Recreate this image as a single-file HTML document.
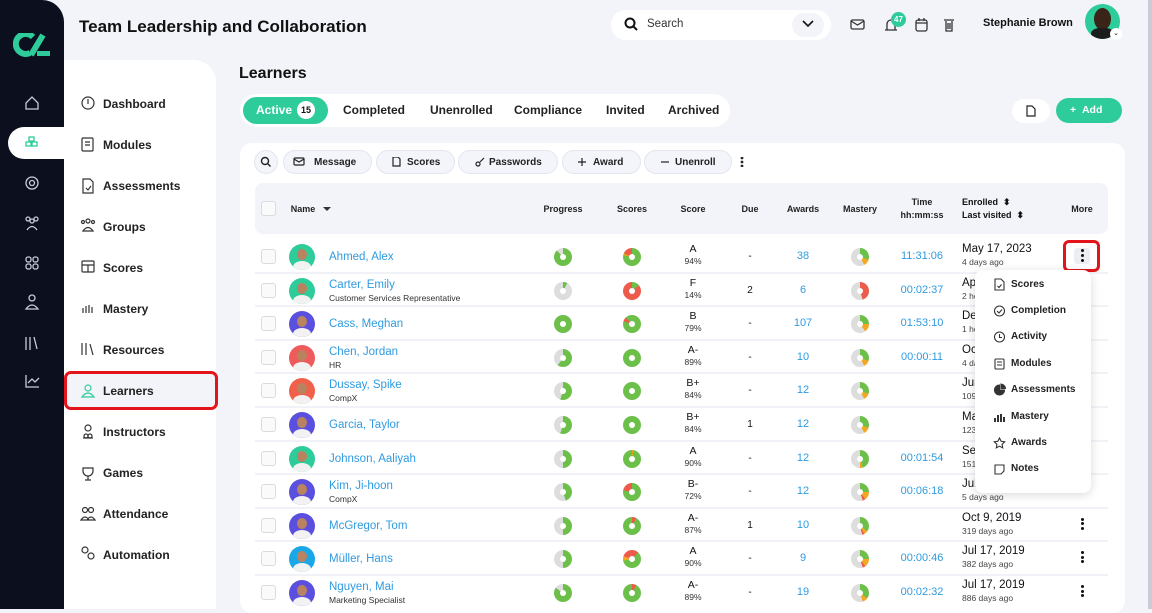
<!DOCTYPE html>
<html><head><meta charset="utf-8"><style>
*{box-sizing:border-box;margin:0;padding:0}
body{width:1152px;height:609px;overflow:hidden;background:#f2f4f9;font-family:"Liberation Sans",sans-serif;color:#111;position:relative}
.a{position:absolute}
.rail{left:0;top:0;width:64px;height:609px;background:#0b0f1e;border-top-right-radius:22px}
.nav{left:64px;top:60px;width:152px;height:549px;background:#fff;border-top-right-radius:22px}
.ni{position:absolute;left:103px;font-size:12px;font-weight:bold;color:#222}
.tabs{left:240px;top:94px;width:490px;height:33px;background:#fff;border-radius:17px}
.tab{position:absolute;top:103px;font-size:12px;font-weight:bold;color:#222}
.card{left:240px;top:143px;width:885px;height:470px;background:#fff;border-radius:12px}
.btn{position:absolute;top:150px;height:24px;border:1px solid #e3e6ef;background:#f4f5fa;border-radius:12px;font-size:10px;font-weight:bold;color:#222;line-height:24px;padding-left:30px}
.hd{left:255px;top:183px;width:853px;height:51px;background:#f2f4f9;border-radius:8px}
.th{position:absolute;font-size:9px;font-weight:bold;color:#222;text-align:center;transform:translateX(-50%);line-height:13px}
.row{position:absolute;left:255px;width:853px;height:33.6px;border-bottom:2px solid #f0f2f7}
.row>*{position:absolute}
.cb{left:6px;top:9px;width:15px;height:15px;border:1px solid #d8dbe2;border-radius:3px;background:#fafafa}
.av{left:34px;top:4px;width:26px;height:26px;border-radius:50%;overflow:hidden}
.av::after{content:"";position:absolute;left:8px;top:5px;width:10px;height:11px;border-radius:50%;background:#b9835f}
.av::before{content:"";position:absolute;left:4px;top:17px;width:18px;height:12px;border-radius:50%;background:#f2f2f2}
.nm{left:74px;font-size:11.5px;color:#2f9be0}
.sub{left:74px;font-size:8.5px;color:#333}
.d{width:18px;height:18px;border-radius:50%;top:8px;transform:translateX(-50%)}
.d::after{content:"";position:absolute;left:6px;top:6px;width:6px;height:6px;border-radius:50%;background:#fff}
.c{transform:translateX(-50%);text-align:center;font-size:10px}
.sc{top:3px;line-height:12px;font-size:10.5px}
.sc small{font-size:8.5px;color:#333}
.bl{color:#2f9be0;font-size:11px;top:10px}
.en{left:707px;font-size:11.5px;line-height:13px;top:3px}
.en small{font-size:8.5px;color:#444}
.mo{left:826px;top:9px;width:4px}
.mo i{display:block;width:3px;height:3px;background:#111;border-radius:50%;margin:0 0 1.5px}
.menu{left:975px;top:270px;width:116px;height:223px;background:#fff;border-radius:8px;box-shadow:0 2px 10px rgba(0,0,0,.15)}
.mi{position:absolute;left:1011px;font-size:10px;font-weight:bold;color:#222}
</style></head><body>
<div class="a rail"></div>
<svg class="a" style="left:13px;top:33px" width="40" height="26" viewBox="0 0 40 26"><path d="M20 4 A10 10 0 1 0 17 20" stroke="#2ecc9a" stroke-width="6" fill="none"/><path d="M30 2 L18 22" stroke="#2ecc9a" stroke-width="6"/><rect x="24" y="18" width="13" height="5" fill="#2ecc9a"/></svg>
<div class="a" style="left:8px;top:127px;width:60px;height:32px;background:#fff;border-radius:16px 0 0 16px"></div>
<svg class="a" style="left:24px;top:95px" width="16" height="300" viewBox="0 0 16 300" fill="none" stroke="#c9ccd8" stroke-width="1.3">
<path d="M2 8 L8 2 L14 8 V14 H2Z"/>
<g stroke="#2ecc9a"><rect x="5" y="42" width="5" height="4"/><rect x="2" y="47" width="5" height="4"/><rect x="8" y="47" width="5" height="4"/></g>
<circle cx="8" cy="88" r="6"/><circle cx="8" cy="88" r="2.5"/>
<circle cx="4" cy="124" r="2"/><circle cx="12" cy="124" r="2"/><circle cx="8" cy="126" r="2"/><path d="M3 135 q5-7 10 0"/>
<rect x="2" y="162" width="5" height="5" rx="2"/><rect x="9" y="162" width="5" height="5" rx="2"/><rect x="2" y="169" width="5" height="5" rx="2"/><rect x="9" y="169" width="5" height="5" rx="2"/>
<circle cx="8" cy="203" r="3"/><path d="M2 214 q6-8 12 0z"/>
<path d="M2 242v13M6 242v13M10 242l3 12"/>
<path d="M2 280v12h13M4 288l4-4 3 3 4-4"/>
</svg>
<div class="a" style="left:79px;top:17px;font-size:17px;font-weight:bold">Team Leadership and Collaboration</div>
<div class="a" style="left:611px;top:10px;width:220px;height:30px;background:#fff;border-radius:15px"></div>
<svg class="a" style="left:624px;top:17px" width="14" height="14" fill="none" stroke="#111" stroke-width="2"><circle cx="6" cy="6" r="4.5"/><path d="M9.5 9.5L13 13"/></svg>
<div class="a" style="left:647px;top:18px;font-size:11.5px;color:#333">Search</div>
<div class="a" style="left:792px;top:13px;width:32px;height:24px;background:#f2f4f9;border-radius:12px"></div>
<svg class="a" style="left:802px;top:20px" width="12" height="8" fill="none" stroke="#111" stroke-width="1.6"><path d="M1 1l5 5 5-5"/></svg>
<svg class="a" style="left:850px;top:17px" width="110" height="16" fill="none" stroke="#333" stroke-width="1.3"><rect x="1" y="3" width="13" height="9" rx="1.5"/><path d="M1 4l6.5 4 6.5-4"/><path d="M35 13h12M37 13v-6a4 4 0 0 1 8 0v6"/><rect x="66" y="3" width="11" height="11" rx="2"/><path d="M66 6h11M69 1v3M74 1v3"/><path d="M94 3h10M96 4v10h6V4M98 6v6M100 6v6"/></svg>
<div class="a" style="left:891px;top:12px;width:15px;height:15px;border-radius:50%;background:#2ecc9a;color:#fff;font-size:8px;font-weight:bold;text-align:center;line-height:15px">47</div>
<div class="a" style="left:983px;top:17px;font-size:11px;font-weight:bold">Stephanie Brown</div>
<div class="a" style="left:1085px;top:4px;width:35px;height:35px;border-radius:50%;background:#2ecc9a;overflow:hidden"><div class="a" style="left:9px;top:4px;width:17px;height:22px;border-radius:50%;background:#3a2418"></div><div class="a" style="left:6px;top:24px;width:23px;height:14px;border-radius:40%;background:#1c1c1c"></div></div>
<div class="a" style="left:1110px;top:28px;width:12px;height:12px;border-radius:50%;background:#fff;font-size:7px;text-align:center;line-height:12px">⌄</div>

<div class="a nav"></div>
<div class="a" style="left:64px;top:371px;width:154px;height:39px;background:#f2f4f9;border:3px solid #e4141b;border-radius:7px"></div>
<div class="ni" style="top:97px">Dashboard</div><div class="ni" style="top:138px">Modules</div><div class="ni" style="top:179px">Assessments</div><div class="ni" style="top:220px">Groups</div><div class="ni" style="top:261px">Scores</div><div class="ni" style="top:302px">Mastery</div><div class="ni" style="top:343px">Resources</div><div class="ni" style="top:384px">Learners</div><div class="ni" style="top:425px">Instructors</div><div class="ni" style="top:466px">Games</div><div class="ni" style="top:507px">Attendance</div><div class="ni" style="top:548px">Automation</div>
<svg class="a" style="left:80px;top:95px" width="16" height="470" fill="none" stroke="#333" stroke-width="1.2">
<circle cx="8" cy="8" r="6"/><path d="M8 4v5"/>
<rect x="2" y="43" width="11" height="13" rx="1"/><path d="M5 47h5M5 50h5"/>
<path d="M3 84h7l3 3v11H3z"/><path d="M6 93l2 2 3-4"/>
<circle cx="8" cy="126" r="2"/><circle cx="3" cy="127" r="1.5"/><circle cx="13" cy="127" r="1.5"/><path d="M3 136q5-7 10 0z"/>
<rect x="2" y="166" width="12" height="11" rx="1"/><path d="M2 170h12M8 170v7"/>
<path d="M3 218v-5M6 218v-7M9 218v-8M12 218v-6"/>
<path d="M2 248v12M6 248v12M10 249l3 11"/>
<circle cx="8" cy="293" r="3" stroke="#2ecc9a"/><path d="M2 302q6-8 12 0z" stroke="#2ecc9a"/>
<circle cx="8" cy="333" r="3"/><path d="M3 343h10"/><circle cx="6" cy="341" r="2"/><circle cx="10" cy="341" r="2"/>
<path d="M3 373h10v3a5 5 0 0 1-10 0z"/><path d="M8 381v4M5 385h6"/>
<circle cx="5" cy="415" r="2.5"/><circle cx="11" cy="415" r="2.5"/><path d="M1 425q4-6 8 0zM7 425q4-6 8 0z"/>
<circle cx="5" cy="455" r="3"/><circle cx="11" cy="461" r="3"/>
</svg>

<div class="a" style="left:239px;top:65px;font-size:16px;font-weight:bold">Learners</div>
<div class="a tabs"></div>
<div class="a" style="left:243px;top:97px;width:85px;height:27px;background:#2ecc9a;border-radius:14px"></div>
<div class="tab" style="left:256px;color:#fff">Active</div>
<div class="a" style="left:297px;top:101px;width:18px;height:18px;border-radius:50%;background:#fff;font-size:9px;font-weight:bold;text-align:center;line-height:18px">15</div>
<div class="tab" style="left:343px">Completed</div><div class="tab" style="left:430px">Unenrolled</div><div class="tab" style="left:514px">Compliance</div><div class="tab" style="left:606px">Invited</div><div class="tab" style="left:668px">Archived</div>
<div class="a" style="left:1012px;top:99px;width:38px;height:24px;background:#fff;border-radius:12px"></div>
<svg class="a" style="left:1026px;top:105px" width="10" height="12" fill="none" stroke="#222" stroke-width="1.2"><path d="M1 1h5l3 3v7H1z"/></svg>
<div class="a" style="left:1056px;top:98px;width:66px;height:25px;background:#2ecc9a;border-radius:13px;color:#fff;font-size:10.5px;font-weight:bold;line-height:25px;padding-left:14px">+ &nbsp;Add</div>

<div class="a card"></div>
<div class="a" style="left:254px;top:150px;width:24px;height:24px;border-radius:50%;border:1px solid #e3e6ef;background:#f4f5fa"></div>
<svg class="a" style="left:260px;top:156px" width="12" height="12" fill="none" stroke="#222" stroke-width="1.4"><circle cx="5" cy="5" r="3.5"/><path d="M7.5 7.5l3 3"/></svg>
<div class="btn" style="left:283px;width:89px">Message</div>
<div class="btn" style="left:376px;width:79px">Scores</div>
<div class="btn" style="left:458px;width:100px">Passwords</div>
<div class="btn" style="left:562px;width:79px">Award</div>
<div class="btn" style="left:644px;width:88px">Unenroll</div>
<svg class="a" style="left:293px;top:157px" width="460" height="10" fill="none" stroke="#222" stroke-width="1.2"><rect x="1" y="1" width="10" height="7" rx="1"/><path d="M1 2l5 3 5-3"/><path d="M100 0h5l2 2v7h-7z"/><circle cx="185" cy="7" r="2"/><path d="M187 5l4-4"/><path d="M285 5h8M289 1v8"/><path d="M368 5h8"/><circle cx="449" cy="1" r=".8"/><circle cx="449" cy="5" r=".8"/><circle cx="449" cy="9" r=".8"/></svg>

<div class="a hd"></div>
<div class="a" style="left:261px;top:201px;width:15px;height:15px;border:1px solid #d8dbe2;border-radius:3px;background:#fafafa"></div>
<div class="th" style="left:303px;top:203px">Name</div><div class="a" style="left:323px;top:207px;border:4px solid transparent;border-top:4px solid #333"></div>
<div class="th" style="left:563px;top:203px">Progress</div><div class="th" style="left:632px;top:203px">Scores</div><div class="th" style="left:693px;top:203px">Score</div><div class="th" style="left:750px;top:203px">Due</div><div class="th" style="left:803px;top:203px">Awards</div><div class="th" style="left:860px;top:203px">Mastery</div><div class="th" style="left:922px;top:196px">Time<br>hh:mm:ss</div>
<div class="a" style="left:962px;top:196px;font-size:9px;font-weight:bold;line-height:13px">Enrolled &nbsp;⬍<br>Last visited &nbsp;⬍</div>
<div class="th" style="left:1082px;top:203px">More</div>

<div class="row" style="top:240px"><div class="cb"></div><div class="av" style="background:#2ecc9a"></div><div class="nm" style="top:11px">Ahmed, Alex</div>
<div class="d" style="left:308px;background:conic-gradient(#6cc04a 0 88%,#ddd 0)"></div><div class="d" style="left:377px;background:conic-gradient(#6cc04a 0 78%,#e8a020 0 82%,#ec5b4b 0)"></div>
<div class="c sc" style="left:438px">A<br><small>94%</small></div><div class="c" style="left:495px;top:11px">-</div><div class="c bl" style="left:548px">38</div>
<div class="d" style="left:605px;background:conic-gradient(#6cc04a 0 30%,#f5a623 0 42%,#ddd 0)"></div><div class="c bl" style="left:667px">11:31:06</div>
<div class="en">May 17, 2023<br><small>4 days ago</small></div></div>
<div class="a" style="left:1063px;top:240px;width:37px;height:32px;border:3px solid #e4141b;border-radius:6px;background:#fff"><div style="position:absolute;left:8px;top:5px;width:16px;height:16px;background:#eceef3;border-radius:3px"></div><div style="position:absolute;left:14.5px;top:6px;width:3px;line-height:0"><i style="display:block;width:3px;height:3px;background:#111;border-radius:50%;margin-bottom:2px"></i><i style="display:block;width:3px;height:3px;background:#111;border-radius:50%;margin-bottom:2px"></i><i style="display:block;width:3px;height:3px;background:#111;border-radius:50%"></i></div></div>

<div class="row" style="top:273.6px"><div class="cb"></div><div class="av" style="background:#2ecc9a"></div><div class="nm" style="top:5px">Carter, Emily</div><div class="sub" style="top:19px">Customer Services Representative</div>
<div class="d" style="left:308px;background:conic-gradient(#6cc04a 0 8%,#ddd 0)"></div><div class="d" style="left:377px;background:conic-gradient(#6cc04a 0 14%,#ec5b4b 0)"></div>
<div class="c sc" style="left:438px">F<br><small>14%</small></div><div class="c" style="left:495px;top:11px">2</div><div class="c bl" style="left:548px">6</div>
<div class="d" style="left:605px;background:conic-gradient(#ec5b4b 0 45%,#ddd 0)"></div><div class="c bl" style="left:667px">00:02:37</div>
<div class="en">Apr 12, 2023<br><small>2 hours ago</small></div></div>

<div class="row" style="top:307.2px"><div class="cb"></div><div class="av" style="background:#5b4fe0"></div><div class="nm" style="top:11px">Cass, Meghan</div>
<div class="d" style="left:308px;background:conic-gradient(#6cc04a 0 100%)"></div><div class="d" style="left:377px;background:conic-gradient(#6cc04a 0 80%,#ec5b4b 0 88%,#6cc04a 0)"></div>
<div class="c sc" style="left:438px">B<br><small>79%</small></div><div class="c" style="left:495px;top:11px">-</div><div class="c bl" style="left:548px">107</div>
<div class="d" style="left:605px;background:conic-gradient(#6cc04a 0 25%,#f5a623 0 40%,#ddd 0)"></div><div class="c bl" style="left:667px">01:53:10</div>
<div class="en">Dec 1, 2022<br><small>1 hour ago</small></div></div>

<div class="row" style="top:340.8px"><div class="cb"></div><div class="av" style="background:#ef5a5a"></div><div class="nm" style="top:5px">Chen, Jordan</div><div class="sub" style="top:19px">HR</div>
<div class="d" style="left:308px;background:conic-gradient(#6cc04a 0 60%,#ddd 0)"></div><div class="d" style="left:377px;background:conic-gradient(#6cc04a 0 100%)"></div>
<div class="c sc" style="left:438px">A-<br><small>89%</small></div><div class="c" style="left:495px;top:11px">-</div><div class="c bl" style="left:548px">10</div>
<div class="d" style="left:605px;background:conic-gradient(#6cc04a 0 30%,#f5a623 0 42%,#ddd 0)"></div><div class="c bl" style="left:667px">00:00:11</div>
<div class="en">Oct 4, 2022<br><small>4 days ago</small></div></div>

<div class="row" style="top:374.4px"><div class="cb"></div><div class="av" style="background:#f0604a"></div><div class="nm" style="top:5px">Dussay, Spike</div><div class="sub" style="top:19px">CompX</div>
<div class="d" style="left:308px;background:conic-gradient(#6cc04a 0 55%,#ddd 0)"></div><div class="d" style="left:377px;background:conic-gradient(#6cc04a 0 100%)"></div>
<div class="c sc" style="left:438px">B+<br><small>84%</small></div><div class="c" style="left:495px;top:11px">-</div><div class="c bl" style="left:548px">12</div>
<div class="d" style="left:605px;background:conic-gradient(#6cc04a 0 30%,#f5a623 0 42%,#ddd 0)"></div>
<div class="en">Jun 5, 2022<br><small>109 days ago</small></div></div>

<div class="row" style="top:408px"><div class="cb"></div><div class="av" style="background:#5b4fe0"></div><div class="nm" style="top:11px">Garcia, Taylor</div>
<div class="d" style="left:308px;background:conic-gradient(#6cc04a 0 55%,#ddd 0)"></div><div class="d" style="left:377px;background:conic-gradient(#6cc04a 0 100%)"></div>
<div class="c sc" style="left:438px">B+<br><small>84%</small></div><div class="c" style="left:495px;top:11px">1</div><div class="c bl" style="left:548px">12</div>
<div class="d" style="left:605px;background:conic-gradient(#6cc04a 0 30%,#f5a623 0 42%,#ddd 0)"></div>
<div class="en">Mar 8, 2022<br><small>123 days ago</small></div></div>

<div class="row" style="top:441.6px"><div class="cb"></div><div class="av" style="background:#2ecc9a"></div><div class="nm" style="top:11px">Johnson, Aaliyah</div>
<div class="d" style="left:308px;background:conic-gradient(#6cc04a 0 50%,#ddd 0)"></div><div class="d" style="left:377px;background:conic-gradient(#e8a020 0 3%,#6cc04a 0)"></div>
<div class="c sc" style="left:438px">A<br><small>90%</small></div><div class="c" style="left:495px;top:11px">-</div><div class="c bl" style="left:548px">12</div>
<div class="d" style="left:605px;background:conic-gradient(#6cc04a 0 45%,#f5a623 0 50%,#ddd 0)"></div><div class="c bl" style="left:667px">00:01:54</div>
<div class="en">Sep 2, 2021<br><small>151 days ago</small></div></div>

<div class="row" style="top:475.2px"><div class="cb"></div><div class="av" style="background:#5b4fe0"></div><div class="nm" style="top:5px">Kim, Ji-hoon</div><div class="sub" style="top:19px">CompX</div>
<div class="d" style="left:308px;background:conic-gradient(#6cc04a 0 45%,#ddd 0)"></div><div class="d" style="left:377px;background:conic-gradient(#6cc04a 0 78%,#ec5b4b 0)"></div>
<div class="c sc" style="left:438px">B-<br><small>72%</small></div><div class="c" style="left:495px;top:11px">-</div><div class="c bl" style="left:548px">12</div>
<div class="d" style="left:605px;background:conic-gradient(#6cc04a 0 25%,#f5a623 0 40%,#ec5b4b 0 45%,#ddd 0)"></div><div class="c bl" style="left:667px">00:06:18</div>
<div class="en">Jul 6, 2021<br><small>5 days ago</small></div></div>

<div class="row" style="top:508.8px"><div class="cb"></div><div class="av" style="background:#5b4fe0"></div><div class="nm" style="top:11px">McGregor, Tom</div>
<div class="d" style="left:308px;background:conic-gradient(#6cc04a 0 50%,#ddd 0)"></div><div class="d" style="left:377px;background:conic-gradient(#ec5b4b 0 8%,#6cc04a 0)"></div>
<div class="c sc" style="left:438px">A-<br><small>87%</small></div><div class="c" style="left:495px;top:11px">1</div><div class="c bl" style="left:548px">10</div>
<div class="d" style="left:605px;background:conic-gradient(#6cc04a 0 35%,#f5a623 0 42%,#ec5b4b 0 46%,#ddd 0)"></div>
<div class="en">Oct 9, 2019<br><small>319 days ago</small></div><div class="mo"><i></i><i></i><i></i></div></div>

<div class="row" style="top:542.4px"><div class="cb"></div><div class="av" style="background:#1aa7e8"></div><div class="nm" style="top:11px">Müller, Hans</div>
<div class="d" style="left:308px;background:conic-gradient(#6cc04a 0 50%,#ddd 0)"></div><div class="d" style="left:377px;background:conic-gradient(#ec5b4b 0 12%,#6cc04a 0 72%,#f5a623 0 80%,#ec5b4b 0 100%)"></div>
<div class="c sc" style="left:438px">A<br><small>90%</small></div><div class="c" style="left:495px;top:11px">-</div><div class="c bl" style="left:548px">9</div>
<div class="d" style="left:605px;background:conic-gradient(#6cc04a 0 25%,#f5a623 0 40%,#ec5b4b 0 45%,#ddd 0)"></div><div class="c bl" style="left:667px">00:00:46</div>
<div class="en">Jul 17, 2019<br><small>382 days ago</small></div><div class="mo"><i></i><i></i><i></i></div></div>

<div class="row" style="top:576px;border:none"><div class="cb"></div><div class="av" style="background:#5b4fe0"></div><div class="nm" style="top:5px">Nguyen, Mai</div><div class="sub" style="top:19px">Marketing Specialist</div>
<div class="d" style="left:308px;background:conic-gradient(#6cc04a 0 85%,#ddd 0)"></div><div class="d" style="left:377px;background:conic-gradient(#ec5b4b 0 8%,#6cc04a 0)"></div>
<div class="c sc" style="left:438px">A-<br><small>89%</small></div><div class="c" style="left:495px;top:11px">-</div><div class="c bl" style="left:548px">19</div>
<div class="d" style="left:605px;background:conic-gradient(#6cc04a 0 35%,#f5a623 0 45%,#ddd 0)"></div><div class="c bl" style="left:667px">00:02:32</div>
<div class="en">Jul 17, 2019<br><small>886 days ago</small></div><div class="mo"><i></i><i></i><i></i></div></div>

<div class="a menu"></div>
<div class="mi" style="top:279px">Scores</div><div class="mi" style="top:305px">Completion</div><div class="mi" style="top:331px">Activity</div><div class="mi" style="top:358px">Modules</div><div class="mi" style="top:384px">Assessments</div><div class="mi" style="top:411px">Mastery</div><div class="mi" style="top:437px">Awards</div><div class="mi" style="top:463px">Notes</div>
<svg class="a" style="left:993px;top:278px" width="14" height="200" fill="none" stroke="#333" stroke-width="1.1">
<path d="M2 1h6l3 3v8H2z"/><path d="M4.5 8l1.5 1.5 2.5-3"/>
<circle cx="6.5" cy="33" r="5"/><path d="M4 33l2 2 3-3.5"/>
<circle cx="6.5" cy="59" r="5"/><path d="M6.5 56v3.5h2.5"/>
<rect x="2" y="81" width="9" height="10" rx="1"/><path d="M4 84h5M4 87h5"/>
<path d="M6.5 107a5 5 0 1 0 5 5h-5z" fill="#333"/><path d="M8 106v4.5h4.5A5 5 0 0 0 8 106z" fill="#333"/>
<path d="M2 144v-4M5 144v-7M8 144v-8M11 144v-5" stroke-width="2"/>
<path d="M6.5 160l1.6 3.3 3.6.5-2.6 2.5.6 3.6-3.2-1.7-3.2 1.7.6-3.6-2.6-2.5 3.6-.5z"/>
<path d="M2 187h9v6l-3 3H2z"/>
</svg>

<div class="a" style="left:1148px;top:0;width:4px;height:609px;background:#c9ccd4"></div>
</body></html>
